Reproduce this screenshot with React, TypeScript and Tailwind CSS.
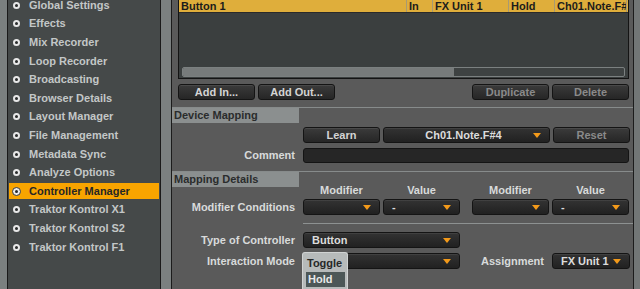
import React from "react";

const FONT = "[font-family:'Liberation_Sans',Arial,sans-serif]";

const items = [
  "Global Settings",
  "Effects",
  "Mix Recorder",
  "Loop Recorder",
  "Broadcasting",
  "Browser Details",
  "Layout Manager",
  "File Management",
  "Metadata Sync",
  "Analyze Options",
  "Controller Manager",
  "Traktor Kontrol X1",
  "Traktor Kontrol S2",
  "Traktor Kontrol F1",
];

function Arrow() {
  return (
    <svg width="8" height="5" viewBox="0 0 8 5" className="shrink-0">
      <polygon points="0,0 8,0 4,5" fill="#f39a1a" />
    </svg>
  );
}

function Btn({ label, w, disabled }: { label: string; w: string; disabled?: boolean }) {
  return (
    <div
      className={`${w} h-[16px] shrink-0 rounded-[3px] border border-[#141414] bg-linear-to-b from-[#3b3b3b] to-[#262626] shadow-[inset_0_1px_0_rgba(255,255,255,0.08)] flex items-center justify-center text-[11px] font-bold leading-none ${
        disabled ? "text-[#8a8a8a]" : "text-[#d4d4d4]"
      }`}
    >
      {label}
    </div>
  );
}

function Drop({
  label,
  w,
  center,
}: {
  label?: string;
  w: string;
  center?: boolean;
}) {
  return (
    <div
      className={`${w} h-[16px] shrink-0 rounded-[3px] border border-[#141414] bg-linear-to-b from-[#333333] to-[#212121] shadow-[inset_0_1px_0_rgba(255,255,255,0.07)] flex items-center pr-[8px] text-[11px] font-bold leading-none text-[#dcdcdc]`}
    >
      <div className={`flex-1 ${center ? "text-center pl-[10px]" : "pl-[8px]"}`}>{label}</div>
      <Arrow />
    </div>
  );
}

function Label({ children }: { children: React.ReactNode }) {
  return (
    <div className="w-[123px] shrink-0 text-right text-[11px] font-bold leading-none text-[#d8dada]">
      {children}
    </div>
  );
}

function SectionHeader({ title }: { title: string }) {
  return (
    <div className="w-[127px] h-[15px] bg-[#8b8f8f] flex items-center pl-[2px] text-[11px] font-bold leading-none text-[#2a2c2c]">
      {title}
    </div>
  );
}

export default function App() {
  return (
    <div className={`w-[640px] h-[289px] overflow-hidden flex bg-[#7b8080] ${FONT}`}>
      {/* left strip */}
      <div className="w-[7px] shrink-0 bg-[#7b8080]" />
      {/* sidebar */}
      <div className="w-[154px] shrink-0 h-full bg-[#454949] border-x border-[#1a1a1a] flex flex-col">
        <div className="-mt-[4px]">
          {items.map((it) => {
            const sel = it === "Controller Manager";
            return (
              <div key={it} className="h-[18.6px] flex items-center">
                <div
                  className={`mx-px w-full h-[16px] flex items-center pl-[4px] ${
                    sel ? "bg-[#f8a400]" : ""
                  }`}
                >
                  {sel ? (
                    <div className="w-[9px] h-[9px] -ml-[1px] rounded-full bg-[#ececec] border border-[#3a3a3a] flex items-center justify-center">
                      <div className="w-[3px] h-[3px] rounded-full bg-[#2a2a2a]" />
                    </div>
                  ) : (
                    <div className="w-[7px] h-[7px] rounded-full border-[2px] border-[#e8e8e8] bg-[#2a2c2c]" />
                  )}
                  <div
                    className={`${sel ? "ml-[8px] text-[#262626]" : "ml-[9px] text-[#c3c7c7]"} text-[11px] font-bold leading-none whitespace-nowrap`}
                  >
                    {it}
                  </div>
                </div>
              </div>
            );
          })}
        </div>
      </div>
      {/* gap strip */}
      <div className="w-[10px] shrink-0 bg-[#7b8080]" />
      {/* main panel */}
      <div className="w-[463px] shrink-0 h-full bg-[#5a5a5a] border-x border-[#1c1c1c] flex flex-col">
        {/* table */}
        <div className="-mt-px ml-[6px] w-[451px] h-[80px] shrink-0 border border-[#141414] bg-[#3b3f3f] flex flex-col">
          <div className="h-[13px] shrink-0 bg-[#dfae3b] border-b border-[#2a2a2a] flex text-[11px] font-bold leading-none text-[#1c1c1c]">
            <div className="w-[227px] pl-[2px] flex items-center">Button 1</div>
            <div className="w-[26px] border-l border-[#a89a72] pl-[2px] flex items-center">In</div>
            <div className="w-[76px] border-l border-[#a89a72] pl-[2px] flex items-center">FX Unit 1</div>
            <div className="w-[46px] border-l border-[#a89a72] pl-[2px] flex items-center">Hold</div>
            <div className="w-[72px] border-l border-[#a89a72] pl-[2px] flex items-center overflow-hidden whitespace-nowrap">
              Ch01.Note.F#4
            </div>
            <div className="w-[1px] bg-[#a89a72]" />
          </div>
          <div className="flex-1" />
          <div className="mx-[3px] mb-[1px] h-[10px] shrink-0 rounded-[2px] border border-[#7b8080] bg-[#3e4242] flex">
            <div className="w-[271px] h-full bg-[#777b7b] rounded-l-[1px]" />
          </div>
        </div>
        {/* button row */}
        <div className="mt-[5px] pl-[6px] pr-[4px] flex gap-[3px]">
          <Btn label="Add In..." w="w-[77px]" />
          <Btn label="Add Out..." w="w-[77px]" />
          <div className="flex-1" />
          <Btn label="Duplicate" w="w-[77px]" disabled />
          <Btn label="Delete" w="w-[77px]" disabled />
        </div>
        {/* separator */}
        <div className="mt-[7px] h-px bg-[#878b8b]" />
        <SectionHeader title="Device Mapping" />
        {/* learn row */}
        <div className="mt-[4px] flex">
          <div className="w-[131px] shrink-0" />
          <div className="flex gap-[3px]">
            <Btn label="Learn" w="w-[77px]" />
            <Drop label="Ch01.Note.F#4" w="w-[167px]" center />
            <Btn label="Reset" w="w-[77px]" disabled />
          </div>
        </div>
        {/* comment */}
        <div className="mt-[5px] flex items-center">
          <Label>Comment</Label>
          <div className="ml-[8px] w-[326px] h-[15px] rounded-[3px] border border-[#141414] bg-[#262626]" />
        </div>
        {/* separator */}
        <div className="mt-[8px] h-px bg-[#878b8b]" />
        <SectionHeader title="Mapping Details" />
        {/* column labels */}
        <div className="-mt-[3px] h-[12px] flex text-[11px] font-bold leading-[12px] text-[#d8dada]">
          <div className="w-[131px] shrink-0" />
          <div className="w-[77px] text-center">Modifier</div>
          <div className="ml-[3px] w-[77px] text-center">Value</div>
          <div className="ml-[12px] w-[77px] text-center">Modifier</div>
          <div className="ml-[3px] w-[77px] text-center">Value</div>
        </div>
        {/* modifier conditions */}
        <div className="mt-[3px] flex items-center">
          <Label>Modifier Conditions</Label>
          <div className="ml-[8px] flex">
            <Drop w="w-[77px]" />
            <div className="ml-[3px]">
              <Drop label="-" w="w-[77px]" />
            </div>
            <div className="ml-[12px]">
              <Drop w="w-[77px]" />
            </div>
            <div className="ml-[3px]">
              <Drop label="-" w="w-[77px]" />
            </div>
          </div>
        </div>
        {/* separator */}
        <div className="mt-[8px] ml-[131px] h-px bg-[#8d9191]" />
        {/* type of controller */}
        <div className="mt-[8px] flex items-center">
          <Label>Type of Controller</Label>
          <div className="ml-[8px]">
            <Drop label="Button" w="w-[157px]" />
          </div>
        </div>
        {/* interaction mode */}
        <div className="mt-[5px] flex items-center pr-[3px]">
          <Label>Interaction Mode</Label>
          <div className="ml-[8px] relative">
            <Drop w="w-[157px]" />
            <div className="absolute -left-px -top-px w-[46px] h-[40px] rounded-t-[3px] bg-[#b6baba] border-t border-x border-[#d0d3d3] flex flex-col text-[11px] font-bold leading-none">
              <div className="mt-[5px] pl-[4px] text-[#262828]">Toggle</div>
              <div className="mt-[3px] ml-[3px] w-[39px] h-[15px] bg-[#4c5757] flex items-center pl-[2px] text-[#e6e8e8]">
                Hold
              </div>
            </div>
          </div>
          <div className="ml-auto text-[11px] font-bold leading-none text-[#d8dada]">Assignment</div>
          <div className="ml-[8px]">
            <Drop label="FX Unit 1" w="w-[78px]" />
          </div>
        </div>
      </div>
      {/* right strip */}
      <div className="flex-1 bg-[#727676]" />
    </div>
  );
}
